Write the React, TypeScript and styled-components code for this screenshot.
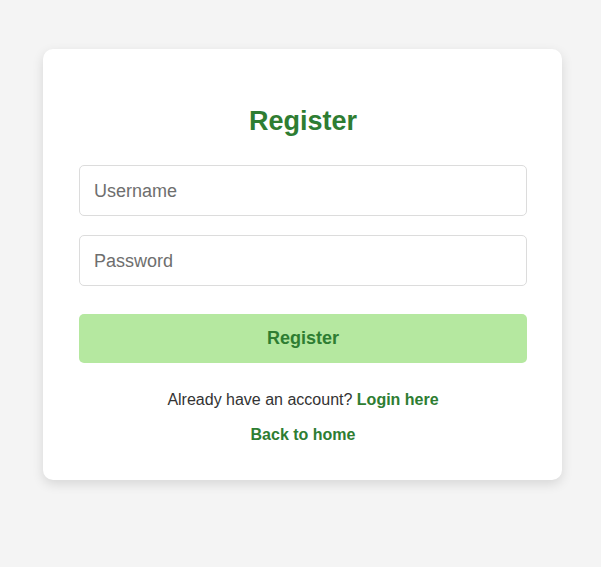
import React from 'react';
import styled, { createGlobalStyle } from 'styled-components';

const GlobalStyle = createGlobalStyle`
  html, body {
    margin: 0;
    padding: 0;
    background: #f4f4f4;
    font-family: "Liberation Sans", Arial, sans-serif;
  }
`;

const Page = styled.div`
  display: flex;
  justify-content: center;
  padding: 49px 39px 0 43px;
  min-height: 567px;
  box-sizing: border-box;
`;

const Card = styled.div`
  flex: 1;
  background: #fff;
  border-radius: 10px;
  box-shadow: 0 4px 12px rgba(0, 0, 0, 0.12);
  padding: 56px 35px 35px 36px;
  display: flex;
  flex-direction: column;
  align-items: stretch;
  box-sizing: border-box;
  height: 431px;
`;

const Title = styled.h2`
  margin: 0 0 28px;
  text-align: center;
  color: #2e7d32;
  font-size: 27px;
  font-weight: bold;
  line-height: 32px;
`;

const Form = styled.form`
  display: flex;
  flex-direction: column;
  gap: 19px;
`;

const Input = styled.input`
  height: 51px;
  box-sizing: border-box;
  border: 1px solid #dcdcdc;
  border-radius: 5px;
  padding: 1px 14px 0;
  font-family: inherit;
  font-size: 18px;
  color: #333;
  outline: none;
  &::placeholder {
    color: #6e6e6e;
  }
`;

const Button = styled.button`
  margin-top: 9px;
  height: 49px;
  border: none;
  border-radius: 5px;
  background: #b5e8a0;
  color: #2e7d32;
  font-family: inherit;
  font-size: 18px;
  font-weight: bold;
  cursor: pointer;
`;

const Note = styled.p`
  margin: 28px 0 0;
  text-align: center;
  font-size: 16px;
  color: #333;
  line-height: 18px;
`;

const Link = styled.a`
  color: #2e7d32;
  font-weight: bold;
  text-decoration: none;
`;

const HomeRow = styled.p`
  margin: 17px 0 0;
  text-align: center;
  font-size: 16px;
  line-height: 18px;
`;

const App: React.FC = () => {
  return (
    <>
      <GlobalStyle />
      <Page>
        <Card>
          <Title>Register</Title>
          <Form onSubmit={(e) => e.preventDefault()}>
            <Input type="text" placeholder="Username" />
            <Input type="password" placeholder="Password" />
            <Button type="submit">Register</Button>
          </Form>
          <Note>
            Already have an account? <Link href="#">Login here</Link>
          </Note>
          <HomeRow>
            <Link href="#">Back to home</Link>
          </HomeRow>
        </Card>
      </Page>
    </>
  );
};

export default App;
